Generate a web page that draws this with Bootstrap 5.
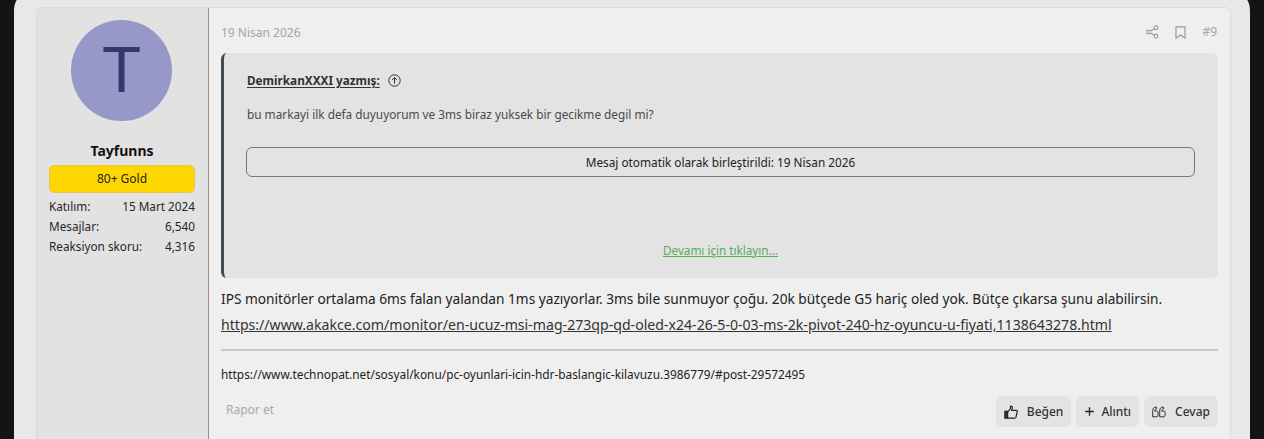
<!DOCTYPE html>
<html lang="tr"><head><meta charset="utf-8"><title>Post</title>
<link href="https://cdn.jsdelivr.net/npm/bootstrap@5.3.0/dist/css/bootstrap.min.css" rel="stylesheet">
<style>
html,body{height:439px;overflow:hidden;background:#141416}
body{font-family:"Noto Sans","Open Sans",sans-serif;color:#1c1c1c;padding:0 14px}
.shell{background:#e8e8e8;border-radius:20px;margin-top:-10px;padding:17px 19px 0 22px;height:470px}
.post{background:#efefef;border:1px solid #dadada;border-radius:6px;height:440px;overflow:hidden}
.side{width:172px;flex:none;background:#e2e2e2;border-right:1px solid #a98c8a;padding:12px 13px 0 12px}
.avatar{width:101px;height:101px;border-radius:50%;background:#9898c8;color:#353570;font-size:64px;line-height:101px;text-align:center;font-family:"Liberation Sans",sans-serif;margin-left:22px}
.uname{font-weight:700;font-size:14px;line-height:19px;text-align:center;margin-top:20px;margin-bottom:5px;color:#111}
.rank{background:#ffd700;border:1px solid #e6c64a;border-radius:5px;font-size:12px;line-height:26px;text-align:center;height:28px;color:#222}
.stat{font-size:11.75px;line-height:20px;color:#262626}
.stats{margin-top:3px}
.main{padding:0 12px 0 12px;min-width:0}
.top{height:45px;padding-top:3px;padding-right:1px;font-size:12px;color:#a6a6a6}
.topdate{padding-top:1px}
.quote{background:#e3e3e3;border-left:3px solid #484850;border-radius:6px;height:225px;padding:19px 23px 0 22px;display:flex;flex-direction:column}
.qhead{font-size:11.75px;font-weight:700;color:#333;line-height:17px;padding-left:1px}
.qhead u{text-underline-offset:2px}
.qtext{font-size:11.8px;color:#4a4a4a;line-height:17px;margin-top:17px;padding-left:1px}
.merged{border:1px solid #777;border-radius:6px;height:30px;margin-top:24px;font-size:11.8px;line-height:29px;text-align:center;color:#222}
.more{margin-top:auto;margin-bottom:19px;font-size:11.7px;line-height:17px;text-align:center;color:#55ad55;text-decoration:underline}
.body1{font-size:13.7px;line-height:26px;color:#222;margin-top:8px;white-space:nowrap}
.body1 a{color:#333;font-size:14.11px;display:block;line-height:25px}
.rule{border-top:2px solid #c8c8c8;margin-top:12px}
.sig{font-size:11.85px;line-height:16px;margin-top:15px;color:#222;white-space:nowrap}
.foot{margin-top:14px}
.report{font-size:12px;color:#a8a8a8;padding-left:5px;padding-top:5px}
.acts{gap:5px}
.act{background:#e3e3e3;border-radius:6px;height:31px;padding:0 8px;font-size:12px;font-weight:500;color:#333;display:flex;align-items:center;gap:6px}
.act.wide{gap:9px}
</style></head>
<body>
<div class="shell">
<div class="post d-flex">
  <aside class="side">
    <div class="avatar">T</div>
    <div class="uname">Tayfunns</div>
    <div class="rank">80+ Gold</div>
    <div class="stats">
      <div class="stat d-flex justify-content-between"><span>Katılım:</span><span>15 Mart 2024</span></div>
      <div class="stat d-flex justify-content-between"><span>Mesajlar:</span><span>6,540</span></div>
      <div class="stat d-flex justify-content-between"><span>Reaksiyon skoru:</span><span>4,316</span></div>
    </div>
  </aside>
  <main class="main flex-grow-1">
    <div class="top d-flex align-items-center justify-content-between">
      <span class="topdate">19 Nisan 2026</span>
      <div class="d-flex align-items-center gap-3">
        <svg width="13" height="14" viewBox="0 0 13 14" fill="none" stroke="#9a9a9a" stroke-width="1.1"><circle cx="2.6" cy="7" r="1.9"/><circle cx="10" cy="2.7" r="1.9"/><circle cx="10" cy="11.3" r="1.9"/><path d="M4.3 6 8.3 3.7M4.3 8 8.3 10.3"/></svg>
        <svg width="11" height="13" viewBox="0 0 11 13" fill="none" stroke="#9a9a9a" stroke-width="1.2"><path d="M1 .8h9v11.4L5.5 9 1 12.2z"/></svg>
        <span>#9</span>
      </div>
    </div>
    <div class="quote">
      <div class="qhead d-flex align-items-center gap-2"><u>DemirkanXXXI yazmış:</u>
        <svg width="13" height="13" viewBox="0 0 13 13" fill="none" stroke="#333" stroke-width="1"><circle cx="6.5" cy="6.5" r="5.7"/><path d="M6.5 9.6V3.6M4 6l2.5-2.5L9 6"/></svg></div>
      <div class="qtext">bu markayi ilk defa duyuyorum ve 3ms biraz yuksek bir gecikme degil mi?</div>
      <div class="merged">Mesaj otomatik olarak birleştirildi: 19 Nisan 2026</div>
      <div class="more">Devamı için tıklayın...</div>
    </div>
    <div class="body1">IPS monitörler ortalama 6ms falan yalandan 1ms yazıyorlar. 3ms bile sunmuyor çoğu. 20k bütçede G5 hariç oled yok. Bütçe çıkarsa şunu alabilirsin.<a href="#">https://www.akakce.com/monitor/en-ucuz-msi-mag-273qp-qd-oled-x24-26-5-0-03-ms-2k-pivot-240-hz-oyuncu-u-fiyati,1138643278.html</a></div>
    <div class="rule"></div>
    <div class="sig">https://www.technopat.net/sosyal/konu/pc-oyunlari-icin-hdr-baslangic-kilavuzu.3986779/#post-29572495</div>
    <div class="foot d-flex justify-content-between align-items-start">
      <span class="report">Rapor et</span>
      <div class="d-flex acts">
        <span class="act wide"><svg width="14" height="14" viewBox="0 0 13 13" fill="none" stroke="#222" stroke-width="1.1"><path fill="#333" d="M.8 6h2.6v6.2H.8z"/><path d="M3.4 6.4 6 3.6V1.2c1.3-.4 1.9.7 1.6 1.7L7.2 5h4.2c.8 0 1.1.7.9 1.3l-1.2 5c-.2.6-.6.9-1.2.9H3.4"/></svg>Beğen</span>
        <span class="act"><svg width="11" height="11" viewBox="0 0 11 11" fill="none" stroke="#222" stroke-width="1.3"><path d="M5.5 1.2v8.6M1.2 5.5h8.6"/></svg>Alıntı</span>
        <span class="act wide"><svg width="14" height="12" viewBox="0 0 14 12" fill="none" stroke="#333" stroke-width="1"><path id="qm" d="M.7 10.8V4.6C.7 2.4 2 1 4.4 1v2c-1 0-1.7.7-1.8 2H4.8c.7 0 1.2.5 1.2 1.2v3.4c0 .7-.5 1.2-1.2 1.2z"/><path d="M7.7 10.8V4.6C7.7 2.4 9 1 11.4 1v2c-1 0-1.7.7-1.8 2H11.8c.7 0 1.2.5 1.2 1.2v3.4c0 .7-.5 1.2-1.2 1.2z"/></svg>Cevap</span>
      </div>
    </div>
  </main>
</div>
</div>
</body></html>
